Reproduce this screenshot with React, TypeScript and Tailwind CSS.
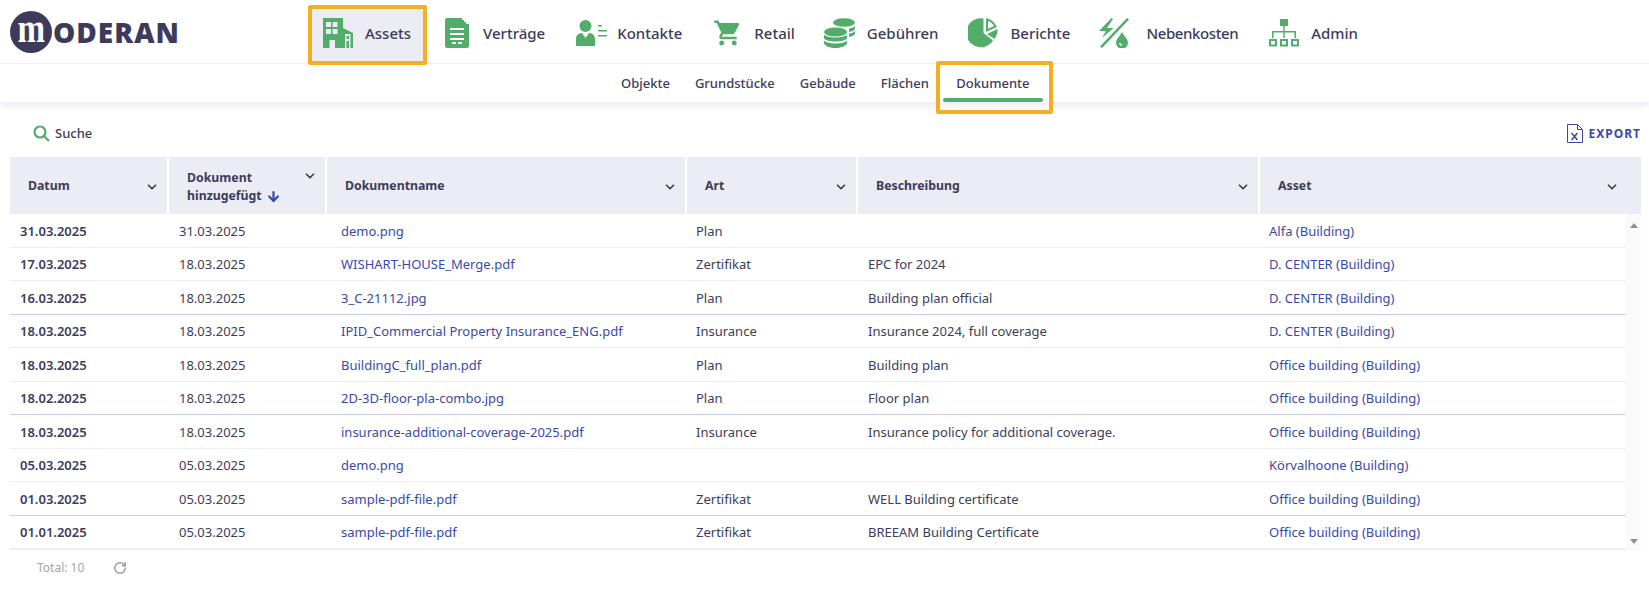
import React from "react";
import { ArrowDown, ChevronDown, RotateCw } from "lucide-react";
import { MdShoppingCart } from "react-icons/md";

const green = "#52ad6a";

const AssetsIcon = () => (
  <svg width="30" height="30" viewBox="0 0 30 30">
    <path fill={green} d="M0 0h20v10l10 5v15H0z" />
    <path fill="#ebecf4" d="M3 4h5v5H3zM9.500 4h5v5h-5zM3 11h5v5H3zM9.500 11h5v5h-5zM6.500 22H12v8H6.500zM22 16h5.500v14H22z" />
    <path fill={green} d="M23.500 18h2.500v3h-2.500zM23.500 23h2.500v7h-2.500z" />
  </svg>
);

const ContractIcon = () => (
  <svg width="24" height="30" viewBox="0 0 24 30">
    <path fill={green} d="M2 0h15v2h2v2h2v2h3v22a2 2 0 0 1-2 2H2a2 2 0 0 1-2-2V2a2 2 0 0 1 2-2z" />
    <path fill="#fff" d="M5 10h14v2H5zM5 15h14v2H5zM5 20h14v2H5zM7 24h4v2H7zM13 24h4v2h-4z" />
  </svg>
);

const ContactIcon = () => (
  <svg width="31" height="26" viewBox="0 0 31 26">
    <circle cx="9.500" cy="6" r="6" fill={green} />
    <path fill={green} d="M0 26v-7c0-4 3-6 6-6l3.500 5 3.500-5c3 0 6 2 6 6v7z" />
    <path fill={green} d="M22 5h4v1.500h-4zM22 10h9v1.500h-9zM22 15h9v1.500h-9z" />
  </svg>
);

const CoinsIcon = () => (
  <svg width="31" height="30" viewBox="0 0 31 30">
    <g fill={green}>
      <ellipse cx="20" cy="4.500" rx="11" ry="4.300" />
      <path d="M25 10.500c2.500 0 5-1 6-2.500v3c-1 1.500-3 2.500-6 3zM25 15.500c2.500 0 5-1 6-2.500v3c-1 1.500-3 2.500-6 3z" />
      <ellipse cx="11.500" cy="14" rx="11.500" ry="4.500" />
      <path d="M0 16.500c3 4 20 4 23 0v4c-3 4-20 4-23 0zM0 22.500c3 4 20 4 23 0v3c-3 6-20 6-23 0z" />
    </g>
  </svg>
);

const ReportIcon = () => (
  <svg width="30" height="30" viewBox="0 0 30 30">
    <path fill={green} d="M15.500.5V15L25 22.500A14.500 14.500 0 1 1 15.500.5z" />
    <path fill="none" stroke={green} strokeWidth="2" d="M19 1.500A13 13 0 0 1 27.500 8.500L19 12.500z" />
    <path fill={green} d="M19 16l10.500-5A15 15 0 0 1 26.500 21z" />
  </svg>
);

const UtilityIcon = () => (
  <svg width="30" height="30" viewBox="0 0 30 30">
    <g fill={green}>
      <path d="M12.500 0L0 13h7L3 20l11.500-10H8l6-9z" />
      <path d="M28 0l2 1.500L3 30l-2-1.500z" />
      <path fillRule="evenodd" d="M23 14c2 4 6 7 6 11a6 5.500 0 0 1-12 0c0-4 4-7 6-11zM20 25a3.500 3.500 0 0 0 3 3v-1.500a2 2 0 0 1-1.500-1.500z" />
    </g>
  </svg>
);

const AdminIcon = () => (
  <svg width="30" height="28" viewBox="0 0 30 28">
    <path fill={green} d="M11 0h8v7h-8zM14.300 7h1.400v5H14.300zM3 12h24v7h-1.500v-5.500H15.700V19h-1.400v-5.500H4.500V19H3z" />
    <path fill={green} fillRule="evenodd" d="M0 20h8v7.500H0zM2 22v3.500h4V22zM11 20h8v7.500h-8zM13 22v3.500h4V22zM22 20h8v7.500h-8zM24 22v3.500h4V22z" />
  </svg>
);

const navItems = [
  { label: "Assets", icon: <AssetsIcon />, cls: "ml-[130px] w-[119px] pl-[11px] pb-[4px] h-[60px] border-4 rounded-[2px] border-[#f5ae1f] bg-[#ebecf4] gap-[12px]" },
  { label: "Verträge", icon: <ContractIcon />, cls: "h-[56px] ml-[18px] gap-[14px]" },
  { label: "Kontakte", icon: <ContactIcon />, cls: "h-[56px] ml-[31px] gap-[10px]" },
  { label: "Retail", icon: <MdShoppingCart size={30} color={green} />, cls: "h-[56px] ml-[31px] gap-[11px]" },
  { label: "Gebühren", icon: <CoinsIcon />, cls: "h-[56px] ml-[29px] gap-[12px]" },
  { label: "Berichte", icon: <ReportIcon />, cls: "h-[56px] ml-[29px] gap-[13px]" },
  { label: "Nebenkosten", icon: <UtilityIcon />, cls: "h-[56px] ml-[29px] gap-[17px] tracking-[-0.4px]" },
  { label: "Admin", icon: <AdminIcon />, cls: "h-[56px] ml-[31px] gap-[12px]" },
];

const tabs = ["Objekte", "Grundstücke", "Gebäude", "Flächen", "Dokumente"];

const rows = [
  { date: "31.03.2025", added: "31.03.2025", name: "demo.png", art: "Plan", desc: "", asset: "Alfa (Building)" },
  { date: "17.03.2025", added: "18.03.2025", name: "WISHART-HOUSE_Merge.pdf", art: "Zertifikat", desc: "EPC for 2024", asset: "D. CENTER (Building)" },
  { date: "16.03.2025", added: "18.03.2025", name: "3_C-21112.jpg", art: "Plan", desc: "Building plan official", asset: "D. CENTER (Building)", dark: true },
  { date: "18.03.2025", added: "18.03.2025", name: "IPID_Commercial Property Insurance_ENG.pdf", art: "Insurance", desc: "Insurance 2024, full coverage", asset: "D. CENTER (Building)" },
  { date: "18.03.2025", added: "18.03.2025", name: "BuildingC_full_plan.pdf", art: "Plan", desc: "Building plan", asset: "Office building (Building)" },
  { date: "18.02.2025", added: "18.03.2025", name: "2D-3D-floor-pla-combo.jpg", art: "Plan", desc: "Floor plan", asset: "Office building (Building)", dark: true },
  { date: "18.03.2025", added: "18.03.2025", name: "insurance-additional-coverage-2025.pdf", art: "Insurance", desc: "Insurance policy for additional coverage.", asset: "Office building (Building)" },
  { date: "05.03.2025", added: "05.03.2025", name: "demo.png", art: "", desc: "", asset: "Körvalhoone (Building)" },
  { date: "01.03.2025", added: "05.03.2025", name: "sample-pdf-file.pdf", art: "Zertifikat", desc: "WELL Building certificate", asset: "Office building (Building)", dark: true },
  { date: "01.01.2025", added: "05.03.2025", name: "sample-pdf-file.pdf", art: "Zertifikat", desc: "BREEAM Building Certificate", asset: "Office building (Building)" },
];

const columns = [
  { label: "Datum", cls: "w-[157px] pl-[18px] pr-[8px]" },
  { label: "Dokumentname", cls: "w-[358px] pl-[18px] pr-[8px]" },
  { label: "Art", cls: "w-[169px] pl-[18px] pr-[8px]" },
  { label: "Beschreibung", cls: "w-[400px] pl-[18px] pr-[8px]" },
  { label: "Asset", cls: "flex-1 pl-[18px] pr-[22px]" },
];

const HeadCell = ({ label, cls }: { label: string; cls: string }) => (
  <div className={`flex items-center justify-between bg-[#ebecf4] pt-[2px] ${cls}`}>
    <span>{label}</span>
    <ChevronDown size={14} strokeWidth={3} />
  </div>
);

export default function App() {
  return (
    <div className="min-h-[598px] bg-white font-['Noto_Sans',sans-serif] text-[13px] text-[#3c3c5a]">
      <header className="relative z-10 shadow-[0_3px_8px_rgba(200,203,232,0.45)]">
        <div className="flex h-[64px] items-start border-b border-[#ebecf4] pl-[10px]">
          <div className="flex h-[64px] w-[168px] items-center">
            <div className="flex h-[42px] w-[42px] shrink-0 items-center justify-center rounded-full bg-[#3c3c5a] pb-[7px] font-['Liberation_Serif',serif] text-[39px] leading-none font-bold text-white">
              <span className="inline-block scale-x-[0.85]">m</span>
            </div>
            <span className="ml-[1px] text-[28px] leading-none font-black tracking-[1px] text-[#3c3c5a]">ODERAN</span>
          </div>
          <nav className="z-10 mt-[5px] flex items-start text-[15px] font-medium">
            {navItems.map((item) => (
              <div key={item.label} className={`flex items-center ${item.cls}`}>
                {item.icon}
                <span>{item.label}</span>
              </div>
            ))}
          </nav>
        </div>
        <div className="flex h-[38px] justify-center pl-[2px] font-medium">
          {tabs.map((tab) =>
            tab === "Dokumente" ? (
              <div key={tab} className="relative ml-[2px] px-[13px] pt-[10px]">
                {tab}
                <span className="absolute right-0 bottom-0 left-0 h-[4px] rounded-[2px] bg-[#52ad6a]" />
                <span className="absolute top-[-3px] right-[-10px] bottom-[-12px] left-[-7px] rounded-[2px] border-4 border-[#f5ae1f]" />
              </div>
            ) : (
              <div key={tab} className="px-[12.5px] pt-[10px]">
                {tab}
              </div>
            )
          )}
        </div>
      </header>

      <div className="flex h-[55px] items-center justify-between pt-[8px] pr-[8px] pl-[33px]">
        <div className="flex items-center gap-[5px]">
          <svg width="17" height="17" viewBox="0 0 17 17" fill="none" stroke={green} strokeWidth="2.200">
            <circle cx="7" cy="7" r="5.500" />
            <path d="M11.500 11.500L16 16" />
          </svg>
          <span className="font-medium">Suche</span>
        </div>
        <div className="flex items-center gap-[5px] text-[12px] font-bold tracking-[1px] text-[#3949ab]">
          <svg width="16" height="19" viewBox="0 0 16 19" fill="none" stroke="#3949ab" strokeWidth="1">
            <path d="M.5.500h10l5 5v13H.5zM10.500.500v5h5" />
            <path d="M4.500 9l6 7M10.500 9l-6 7" strokeWidth="1.500" />
          </svg>
          EXPORT
        </div>
      </div>

      <div className="mr-[8px] ml-[10px]">
        <div className="flex h-[57px] gap-[2px] text-[12.3px] font-bold">
          <HeadCell {...columns[0]} />
          <div className="relative flex w-[156px] items-center bg-[#ebecf4] pt-[2px] pl-[18px] leading-[18px]">
            <div>
              Dokument
              <br />
              hinzugefügt
              <ArrowDown size={15} strokeWidth={3.500} className="ml-[4px] inline text-[#3949ab]" />
            </div>
            <ChevronDown size={14} strokeWidth={3} className="absolute top-[12px] right-[8px]" />
          </div>
          <HeadCell {...columns[1]} />
          <HeadCell {...columns[2]} />
          <HeadCell {...columns[3]} />
          <HeadCell {...columns[4]} />
        </div>
        <div className="flex">
          <div className="w-[1616px] border-b-2 border-[#ebecf4]">
            {rows.map((row, i) => (
              <div
                key={i}
                className={`grid grid-cols-[159px_162px_355px_172px_401px_1fr] items-center pt-[2px] [&>*]:pl-[10px] ${
                  i === rows.length - 1 ? "h-[32.5px]" : row.dark ? "h-[33.5px] border-b border-[#c8cbec]" : "h-[33.5px] border-b border-[#ebecf4]"
                }`}
              >
                <span className="font-semibold">{row.date}</span>
                <span>{row.added}</span>
                <span className="text-[#3949ab]">{row.name}</span>
                <span>{row.art}</span>
                <span>{row.desc}</span>
                <span className="text-[#3949ab]">{row.asset}</span>
              </div>
            ))}
          </div>
          <div className="flex w-[15px] flex-col items-center justify-between bg-[#fafafa] pt-[9px] pb-[6px]">
            <span className="h-0 w-0 border-x-[4.500px] border-b-[5px] border-x-transparent border-b-[#8f8f8f]" />
            <span className="h-0 w-0 border-x-[4.500px] border-t-[5px] border-x-transparent border-t-[#8f8f8f]" />
          </div>
        </div>
        <div className="flex items-center pt-[9px] pl-[27px] text-[12px] text-[#a3a3ad]">
          <span>Total: 10</span>
          <RotateCw size={14} strokeWidth={2.500} className="ml-[29px] text-[#9a9aa6]" />
        </div>
      </div>
    </div>
  );
}
